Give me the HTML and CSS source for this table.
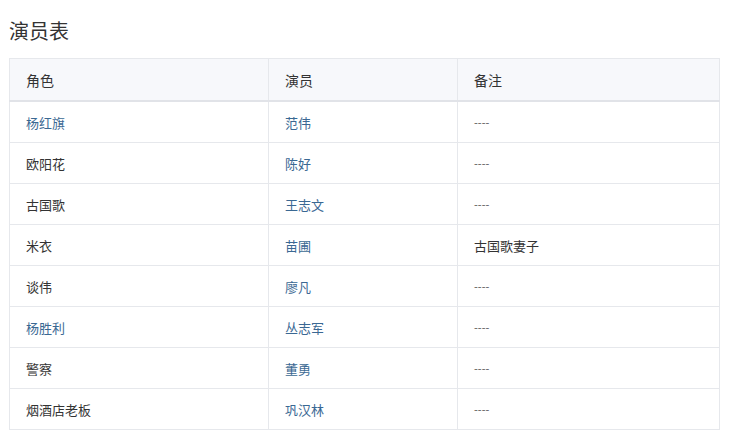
FILE: index.html
```html
<!DOCTYPE html>
<html lang="zh">
<head>
<meta charset="utf-8">
<link rel="stylesheet" href="styles.css">
</head>
<body>
<h2 class="title">演员表</h2>
<table class="cast">
  <colgroup><col class="c1"><col class="c2"><col class="c3"></colgroup>
  <thead>
    <tr><th>角色</th><th>演员</th><th>备注</th></tr>
  </thead>
  <tbody>
    <tr><td class="link">杨红旗</td><td class="link">范伟</td><td class="dash">----</td></tr>
    <tr><td>欧阳花</td><td class="link">陈好</td><td class="dash">----</td></tr>
    <tr><td>古国歌</td><td class="link">王志文</td><td class="dash">----</td></tr>
    <tr><td>米衣</td><td class="link">苗圃</td><td>古国歌妻子</td></tr>
    <tr><td>谈伟</td><td class="link">廖凡</td><td class="dash">----</td></tr>
    <tr><td class="link">杨胜利</td><td class="link">丛志军</td><td class="dash">----</td></tr>
    <tr><td>警察</td><td class="link">董勇</td><td class="dash">----</td></tr>
    <tr><td>烟酒店老板</td><td class="link">巩汉林</td><td class="dash">----</td></tr>
  </tbody>
</table>
</body>
</html>
```
FILE: styles.css
```css
html, body {
  margin: 0;
  background: #ffffff;
}
body {
  padding: 0 9px;
  font-family: "Noto Sans CJK SC", "Noto Sans", sans-serif;
  color: #333333;
}
.title {
  margin: 0;
  padding-top: 18px;
  height: 58px;
  box-sizing: border-box;
  font-size: 20px;
  font-weight: normal;
  line-height: 26px;
  color: #333333;
}
.cast {
  border-collapse: collapse;
  width: 710px;
  table-layout: fixed;
  border: 1px solid #e3e5ea;
}
.c1 { width: 259px; }
.c2 { width: 189px; }
.c3 { width: 262px; }
.cast th, .cast td {
  border: 1px solid #e6e8ec;
  padding: 0 0 0 16px;
  text-align: left;
  vertical-align: middle;
}
.cast th {
  height: 41px;
  background: #f7f8fb;
  font-size: 14px;
  font-weight: normal;
  color: #333333;
  border-bottom: 2px solid #e1e3e8;
}
.cast td {
  height: 40px;
  font-size: 13px;
  color: #333333;
}
.cast td.link {
  color: #3a6893;
}
.cast td.dash {
  color: #555555;
  font-size: 11px;
}
```
